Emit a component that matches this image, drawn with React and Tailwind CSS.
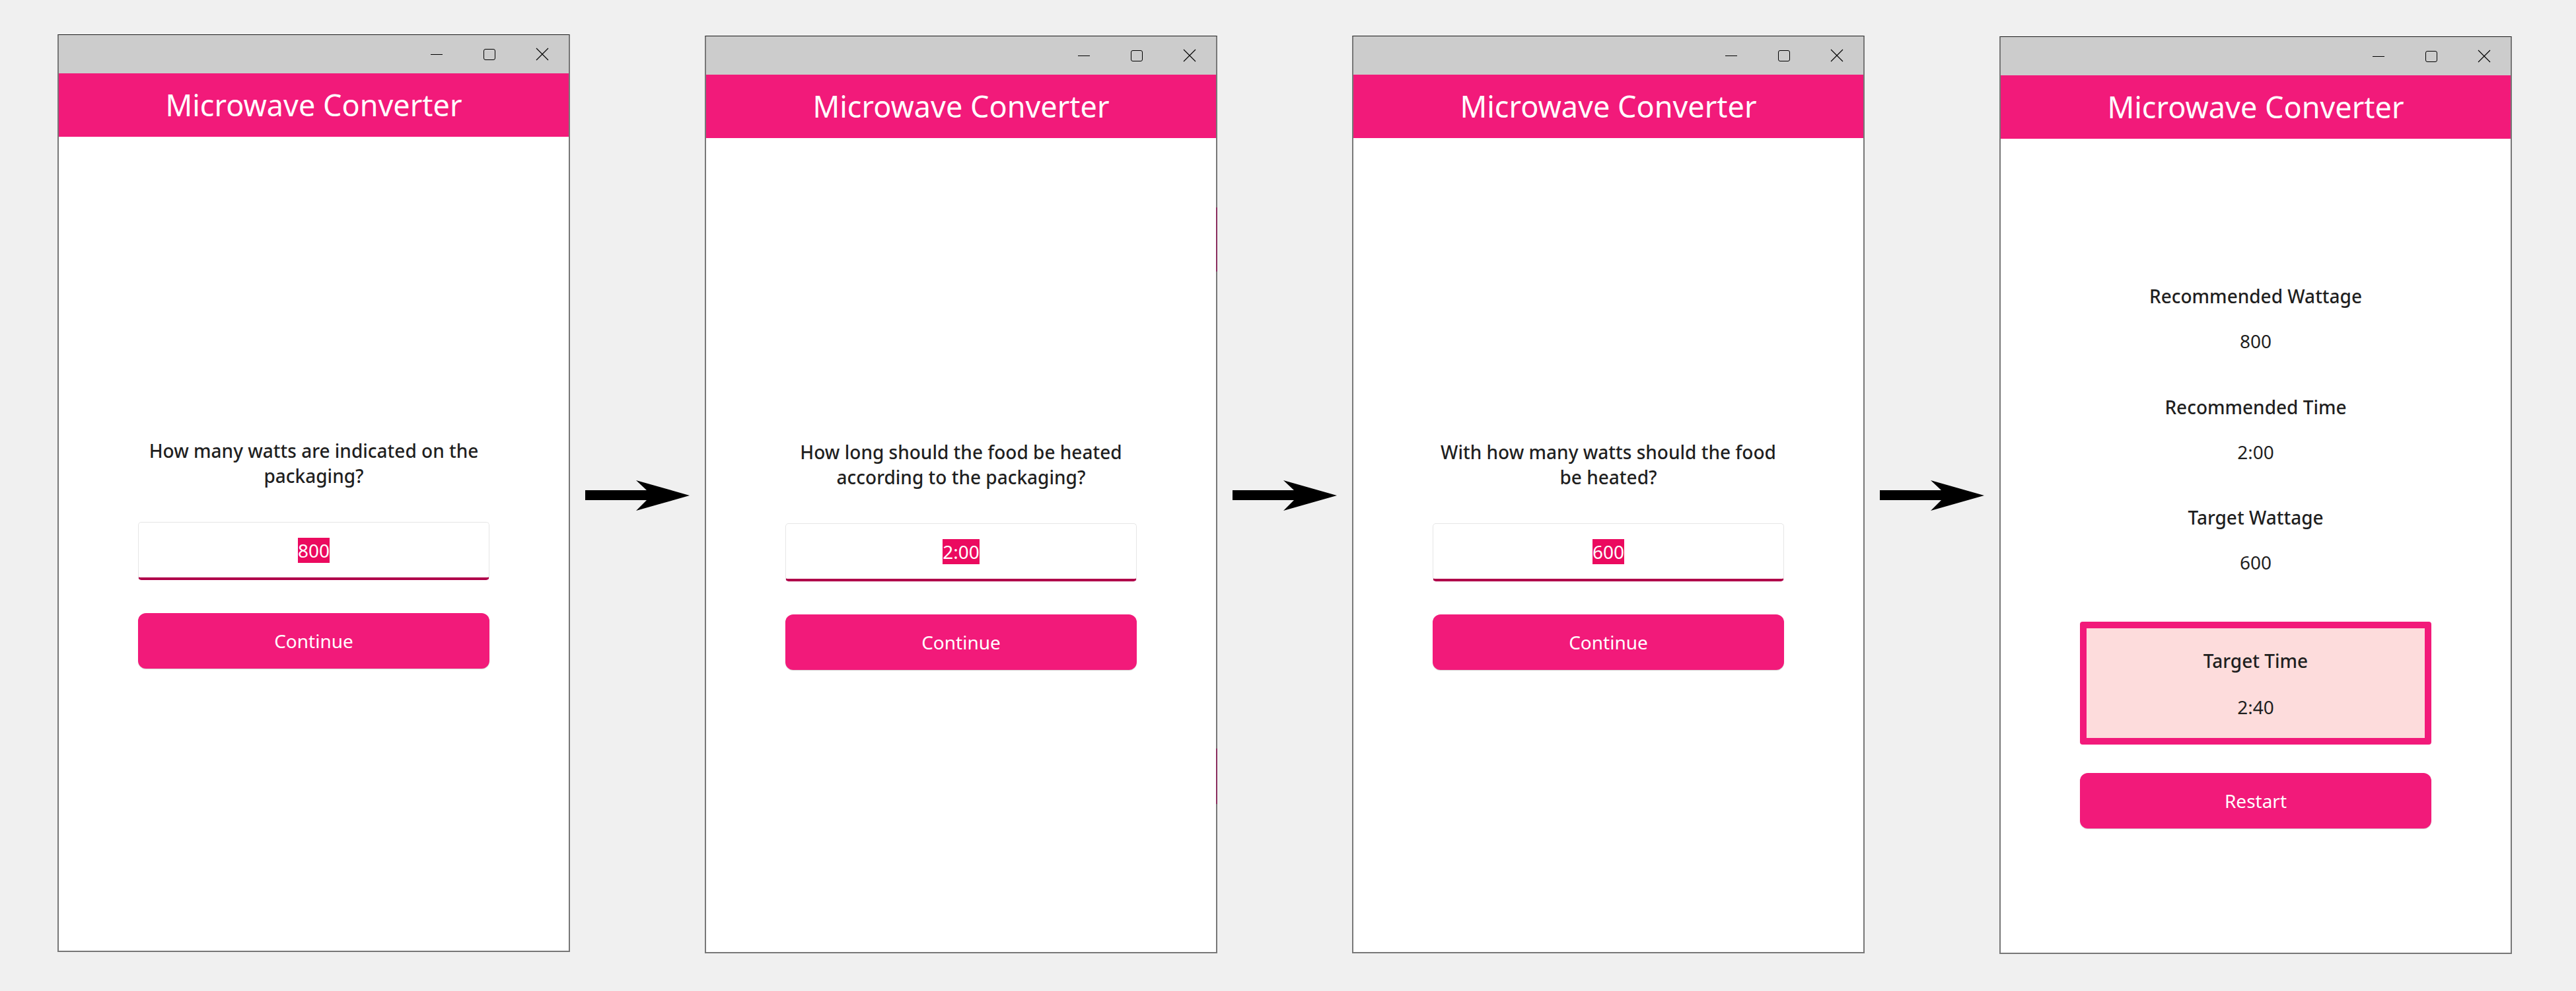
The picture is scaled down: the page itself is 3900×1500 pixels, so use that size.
import React from 'react';

const steps = [
  { question: ['How many watts are indicated on the', 'packaging?'], value: '800', shift: 'mt-0', accent: false },
  { question: ['How long should the food be heated', 'according to the packaging?'], value: '2:00', shift: 'mt-[2px]', accent: true },
  { question: ['With how many watts should the food', 'be heated?'], value: '600', shift: 'mt-[2px]', accent: false },
];

function TitleBar() {
  return (
    <div className="flex h-[58px] justify-end bg-[#cccccc]">
      <div className="flex w-[80px] items-center justify-center">
        <div className="h-px w-[18px] bg-black" />
      </div>
      <div className="flex w-[80px] items-center justify-center">
        <div className="h-[17px] w-[18px] rounded-[3px] border border-black" />
      </div>
      <div className="flex w-[80px] items-center justify-center">
        <svg width="20" height="20" viewBox="0 0 20 20">
          <path d="M1 1L19 19M19 1L1 19" stroke="#000" strokeWidth="1.1" fill="none" />
        </svg>
      </div>
    </div>
  );
}

function Window({ shift, children, accent }) {
  return (
    <div className={`relative flex h-[1389px] w-[776px] shrink-0 flex-col border-x-2 border-b-2 border-t border-x-[#777] border-b-[#777] border-t-[#1a1a1a] bg-white ${shift}`}>
      <TitleBar />
      <div className="flex h-[96px] items-center justify-center bg-[#f21a7a] text-[45px] text-white">
        Microwave Converter
      </div>
      {children}
      {accent && (
        <>
          <div className="absolute right-[-2px] top-[259px] h-[97px] w-[2px] bg-[#8a2d5e]" />
          <div className="absolute right-[-2px] top-[1078px] h-[84px] w-[2px] bg-[#8a2d5e]" />
        </>
      )}
    </div>
  );
}

function Arrow() {
  return (
    <div className="mt-[675px] flex w-[204px] shrink-0 justify-center">
      <svg width="158" height="46" viewBox="0 0 158 46">
        <polygon points="0,15 93,15 77,0 158,23 77,46 93,30 0,30" fill="#000" />
      </svg>
    </div>
  );
}

function Question({ step }) {
  return (
    <div className="flex flex-col items-center pt-[456px]">
      <p className="w-[532px] text-center text-[28px] font-medium leading-[38px] text-[#1f1f1f]">
        {step.question[0]}
        <br />
        {step.question[1]}
      </p>
      <div className="mt-[51px] flex h-[88px] w-[532px] items-center justify-center rounded-[5px] border border-b-4 border-[#e6e6e6] border-b-[#b0004a] bg-white">
        <span className="bg-[#eb0a5f] text-[28px] leading-[38px] text-white">{step.value}</span>
      </div>
      <button className="mt-[50px] h-[84px] w-[532px] rounded-[12px] bg-[#f21a7a] text-[28px] text-white shadow-[0_1px_1px_rgba(0,0,0,0.18)]">
        Continue
      </button>
    </div>
  );
}

function Result() {
  const rows = [
    { label: 'Recommended Wattage', value: '800', gap: 'mt-0' },
    { label: 'Recommended Time', value: '2:00', gap: 'mt-[62px]' },
    { label: 'Target Wattage', value: '600', gap: 'mt-[61px]' },
  ];
  return (
    <div className="flex flex-col items-center pt-[219px] text-[28px] leading-[38px] text-[#1f1f1f]">
      {rows.map((r) => (
        <div key={r.label} className={`flex flex-col items-center ${r.gap}`}>
          <p className="font-medium">{r.label}</p>
          <p className="mt-[30px]">{r.value}</p>
        </div>
      ))}
      <div className="mt-[71px] flex w-[532px] flex-col items-center rounded-[4px] border-[10px] border-[#f21a7a] bg-[#fddcdc] pb-[28px] pt-[30px]">
        <p className="font-medium">Target Time</p>
        <p className="mt-[32px]">2:40</p>
      </div>
      <button className="mt-[43px] h-[84px] w-[532px] rounded-[12px] bg-[#f21a7a] text-[28px] text-white shadow-[0_1px_1px_rgba(0,0,0,0.18)]">
        Restart
      </button>
    </div>
  );
}

export default function App() {
  return (
    <div className="h-[1500px] w-[3900px] overflow-hidden bg-[#f0f0f0] font-['Noto_Sans',sans-serif]">
      <div className="flex items-start pl-[87px] pt-[52px]">
        {steps.map((s, i) => (
          <React.Fragment key={i}>
            <Window shift={s.shift} accent={s.accent}>
              <Question step={s} />
            </Window>
            <Arrow />
          </React.Fragment>
        ))}
        <Window shift="mt-[3px]">
          <Result />
        </Window>
      </div>
    </div>
  );
}
